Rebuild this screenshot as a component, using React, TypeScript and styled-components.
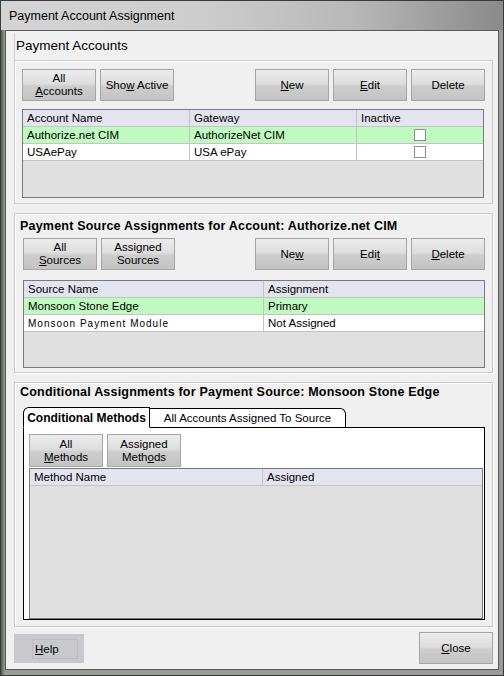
import React from 'react';
import styled, { createGlobalStyle } from 'styled-components';

const GlobalStyle = createGlobalStyle`
  html, body {
    margin: 0;
    padding: 0;
    background: #f0f0f0;
  }
  * {
    box-sizing: border-box;
  }
`;

type Column = { title: string; width: number; };
type Row = { cells: string[]; selected?: boolean; small?: boolean; };

const accountCols: Column[] = [
  { title: 'Account Name', width: 167 },
  { title: 'Gateway', width: 167 },
  { title: 'Inactive', width: 126 },
];

const accountRows: Row[] = [
  { cells: ['Authorize.net CIM', 'AuthorizeNet CIM', 'check'], selected: true },
  { cells: ['USAePay', 'USA ePay', 'check'] },
];

const sourceCols: Column[] = [
  { title: 'Source Name', width: 240 },
  { title: 'Assignment', width: 220 },
];

const sourceRows: Row[] = [
  { cells: ['Monsoon Stone Edge', 'Primary'], selected: true },
  { cells: ['Monsoon Payment Module', 'Not Assigned'], small: true },
];

const methodCols: Column[] = [
  { title: 'Method Name', width: 233 },
  { title: 'Assigned', width: 219 },
];

const Grid = ({ cols, rows, height, width = 462 }: { cols: Column[]; rows: Row[]; height: number; width?: number }) => (
  <GridBox style={{ height, width }}>
    <GridRow>
      {cols.map((c) => (
        <HeaderCell key={c.title} style={{ width: c.width }}>{c.title}</HeaderCell>
      ))}
    </GridRow>
    {rows.map((r, i) => (
      <GridRow key={i} selected={r.selected}>
        {r.cells.map((cell, j) => (
          <Cell key={j} style={{ width: cols[j].width }} small={r.small && j === 0} center={cell === 'check'}>
            {cell === 'check' ? <Check /> : cell}
          </Cell>
        ))}
      </GridRow>
    ))}
  </GridBox>
);

const Btn = ({ children, tall }: { children: React.ReactNode; tall?: boolean }) => (
  <Button tall={tall}>
    <span>{children}</span>
  </Button>
);

const App = () => {
  return (
    <>
      <GlobalStyle />
      <Window>
        <TitleBar>Payment Account Assignment</TitleBar>
        <Client>
          <FirstSection>
            <SectionHeading>Payment Accounts</SectionHeading>
            <Panel>
              <ButtonTray gap={8}>
                <ButtonGroup>
                  <Btn>All<br /><u>A</u>ccounts</Btn>
                  <Btn>Sho<u>w</u> Active</Btn>
                </ButtonGroup>
                <ButtonGroup>
                  <Btn><u>N</u>ew</Btn>
                  <Btn><u>E</u>dit</Btn>
                  <Btn>Delete</Btn>
                </ButtonGroup>
              </ButtonTray>
              <Grid cols={accountCols} rows={accountRows} height={89} />
            </Panel>
          </FirstSection>

          <Section height={160}>
            <BoldHeading top={5}>Payment Source Assignments for Account: Authorize.net CIM</BoldHeading>
            <ButtonTray gap={10}>
              <ButtonGroup>
                <Btn>All<br /><u>S</u>ources</Btn>
                <Btn>Assi<u>g</u>ned<br />Sources</Btn>
              </ButtonGroup>
              <ButtonGroup>
                <Btn>Ne<u>w</u></Btn>
                <Btn>Edi<u>t</u></Btn>
                <Btn><u>D</u>elete</Btn>
              </ButtonGroup>
            </ButtonTray>
            <Grid cols={sourceCols} rows={sourceRows} height={88} />
          </Section>

          <Section height={245}>
            <BoldHeading top={2}>Conditional Assignments for Payment Source: Monsoon Stone Edge</BoldHeading>
            <TabStrip>
              <Tab active>Conditional Methods</Tab>
              <Tab>All Accounts Assigned To Source</Tab>
            </TabStrip>
            <TabPanel>
              <ButtonGroup>
                <Btn tall>All<br /><u>M</u>ethods</Btn>
                <Btn tall>Assigned<br />Meth<u>o</u>ds</Btn>
              </ButtonGroup>
              <Grid cols={methodCols} rows={[]} height={151} width={454} />
            </TabPanel>
          </Section>

          <Footer>
            <FlatButton><FocusRect><u>H</u>elp</FocusRect></FlatButton>
            <Btn><u>C</u>lose</Btn>
          </Footer>
        </Client>
      </Window>
    </>
  );
};

export default App;

const Window = styled.div`
  width: 504px;
  height: 676px;
  display: flex;
  flex-direction: column;
  background: linear-gradient(to right, #4f5a4f 0px, #768076 2px, #979d97 4px, #9a9a9a 100%);
  border: 1px solid #3a3a3a;
  font-family: 'Liberation Sans', Arial, sans-serif;
  color: #000;
`;

const TitleBar = styled.div`
  height: 29px;
  padding: 0 8px;
  display: flex;
  align-items: center;
  font-size: 12.5px;
  background: linear-gradient(to right, #d4d4d4 0%, #cdcdcd 40%, #b8b8b8 70%, #8a8a8a 100%);
`;

const Client = styled.div`
  flex: 1;
  margin: 0 4px 5px 4px;
  background: #f0f0f0;
  border: 1px solid #5a5a5a;
  padding: 2px 5px 0 8px;
  display: flex;
  flex-direction: column;
`;

const FirstSection = styled.div`
  height: 171px;
  border-left: 1px solid #d0d0d0;
  border-bottom: 1px solid #d0d0d0;
  display: flex;
  flex-direction: column;
`;

const SectionHeading = styled.div`
  height: 27px;
  padding: 5px 0 0 1px;
  font-size: 13.5px;
`;

const Panel = styled.div`
  flex: 1;
  border-top: 1px solid #c8c8c8;
  border-right: 1px solid #c8c8c8;
  box-shadow: inset 1px 1px 0 #fff;
  padding: 8px 7px 0 7px;
  display: flex;
  flex-direction: column;
`;

const Section = styled.div<{ height: number }>`
  height: ${props => props.height}px;
  margin-top: 9px;
  border: 1px solid #c8c8c8;
  box-shadow: inset 1px 1px 0 #fff, 1px 1px 0 #fff;
  padding: 0 7px 0 8px;
  display: flex;
  flex-direction: column;
`;

const BoldHeading = styled.div<{ top: number }>`
  height: 24px;
  padding-top: ${props => props.top}px;
  margin-left: -3px;
  font-size: 12.5px;
  line-height: 15px;
  font-weight: bold;
  letter-spacing: 0.2px;
  white-space: nowrap;
`;

const ButtonTray = styled.div<{ gap: number }>`
  display: flex;
  justify-content: space-between;
  margin-bottom: ${props => props.gap}px;
`;

const ButtonGroup = styled.div`
  display: flex;
  gap: 4px;
`;

const Button = styled.div<{ tall?: boolean }>`
  width: 74px;
  height: ${props => props.tall ? 33 : 32}px;
  border: 1px solid #a6a6a6;
  background: linear-gradient(to bottom, #ececec 0%, #dedede 45%, #cdcdcd 55%, #c4c4c4 100%);
  display: flex;
  align-items: center;
  justify-content: center;
  text-align: center;
  font-size: 11.5px;
  line-height: 13px;
  user-select: none;
  flex-shrink: 0;

  u {
    text-underline-offset: 1px;
  }
`;

const FlatButton = styled.div`
  width: 70px;
  height: 29px;
  margin-top: 2px;
  background: #c9c9cd;
  display: flex;
  align-items: center;
  padding-left: 18px;
  font-size: 11.5px;
`;

const FocusRect = styled.div`
  width: 46px;
  height: 20px;
  border: 1px solid #bdbdc1;
  display: flex;
  align-items: center;
  padding-left: 2px;
`;

const GridBox = styled.div`
  border: 1px solid #7a7a7a;
  background: #e0e0e0;
  overflow: hidden;
  flex-shrink: 0;
`;

const GridRow = styled.div<{ selected?: boolean }>`
  display: flex;
  height: 17px;
  background: ${props => props.selected ? '#c0fac0' : '#fff'};
  border-bottom: 1px solid #c4c4c4;
`;

const HeaderCell = styled.div`
  background: #e4e4f0;
  border-right: 1px solid #c4c4c4;
  font-size: 11.5px;
  padding: 1px 4px;
  line-height: 15px;
  white-space: nowrap;
  &:last-child {
    flex: 1;
    border-right: none;
  }
`;

const Cell = styled.div<{ small?: boolean; center?: boolean }>`
  border-right: 1px solid #c4c4c4;
  font-size: ${props => props.small ? 10 : 11.5}px;
  letter-spacing: ${props => props.small ? 1 : 0}px;
  padding: 1px 4px;
  line-height: 15px;
  white-space: nowrap;
  display: flex;
  align-items: center;
  justify-content: ${props => props.center ? 'center' : 'flex-start'};
  &:last-child {
    flex: 1;
    border-right: none;
  }
`;

const Check = styled.span`
  width: 12px;
  height: 12px;
  border: 1px solid #8e8e8e;
  background: #fff;
  display: inline-block;
`;

const TabStrip = styled.div`
  display: flex;
  height: 21px;
  position: relative;
  z-index: 1;
  margin-bottom: -1px;
`;

const Tab = styled.div<{ active?: boolean }>`
  height: ${props => props.active ? 21 : 20}px;
  margin-top: ${props => props.active ? 0 : 1}px;
  width: ${props => props.active ? 127 : 196}px;
  background: #fff;
  border: 1px solid #000;
  border-bottom: ${props => props.active ? '1px solid #fff' : '1px solid #000'};
  border-left: ${props => props.active ? '1px solid #000' : 'none'};
  border-radius: ${props => props.active ? '6px 0 0 0' : '0 6px 0 0'};
  font-size: ${props => props.active ? 12 : 11.5}px;
  font-weight: ${props => props.active ? 'bold' : 'normal'};
  display: flex;
  align-items: center;
  justify-content: center;
  white-space: nowrap;
`;

const TabPanel = styled.div`
  width: 462px;
  height: 193px;
  border: 1px solid #000;
  background: #fff;
  padding: 6px 0 0 5px;
  display: flex;
  flex-direction: column;
  gap: 1px;
`;

const Footer = styled.div`
  display: flex;
  justify-content: space-between;
  align-items: flex-start;
  margin-top: 5px;
`;
